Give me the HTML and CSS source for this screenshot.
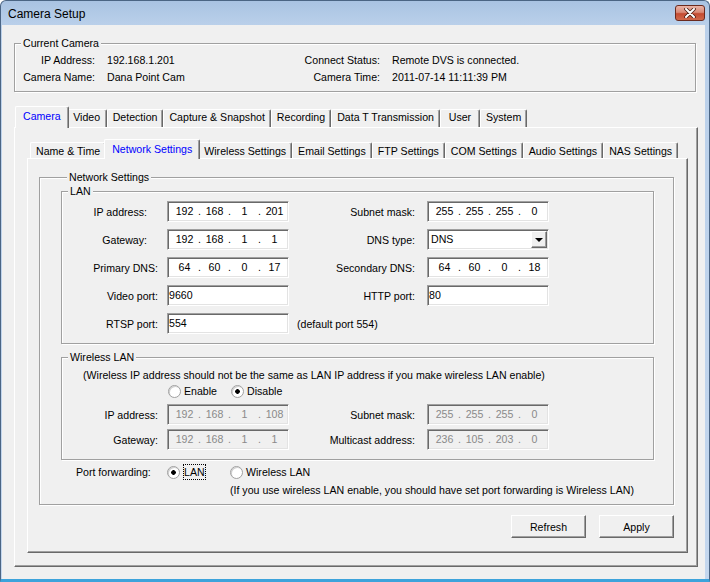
FILE: index.html
```html
<!DOCTYPE html>
<html>
<head>
<title>Camera Setup</title>
<link rel="stylesheet" href="styles.css">
</head>
<body>
<div class="window">
  <div class="titlebar">
    <span class="title">Camera Setup</span>
    <span class="close">
      <svg width="12" height="10" viewBox="0 0 12 10">
        <path d="M2 1 L10 9 M10 1 L2 9" stroke="#4a1c12" stroke-width="3.6" stroke-linecap="round"/>
        <path d="M2 1 L10 9 M10 1 L2 9" stroke="#fff" stroke-width="2" stroke-linecap="round"/>
      </svg>
    </span>
  </div>

  <div class="client">
    <div class="group current">
      <div class="legend">Current Camera</div>
      <div class="info">
        <span class="lbl">IP Address:</span><span>192.168.1.201</span>
        <span class="lbl">Connect Status:</span><span>Remote DVS is connected.</span>
        <span class="lbl">Camera Name:</span><span>Dana Point Cam</span>
        <span class="lbl">Camera Time:</span><span>2011-07-14 11:11:39 PM</span>
      </div>
    </div>

    <div class="tabs outer-tabs">
      <span class="tab active">Camera</span>
      <span class="tab">Video</span>
      <span class="tab">Detection</span>
      <span class="tab">Capture &amp; Snapshot</span>
      <span class="tab">Recording</span>
      <span class="tab">Data T Transmission</span>
      <span class="tab">User</span>
      <span class="tab">System</span>
    </div>
    <div class="panel outer-panel">
      <div class="tabs inner-tabs">
        <span class="tab">Name &amp; Time</span>
        <span class="tab active">Network Settings</span>
        <span class="tab">Wireless Settings</span>
        <span class="tab">Email Settings</span>
        <span class="tab">FTP Settings</span>
        <span class="tab">COM Settings</span>
        <span class="tab">Audio Settings</span>
        <span class="tab">NAS Settings</span>
      </div>
      <div class="panel inner-panel">
        <div class="group ns">
          <div class="legend">Network Settings</div>

          <div class="group lan">
            <div class="legend">LAN</div>
            <div class="form lan-form">
              <span class="l1 off">IP address:</span>
              <div class="field ip"><span>192</span><i>.</i><span>168</span><i>.</i><span>1</span><i>.</i><span>201</span></div>
              <span class="l2">Subnet mask:</span>
              <div class="field ip"><span>255</span><i>.</i><span>255</span><i>.</i><span>255</span><i>.</i><span>0</span></div>

              <span class="l1 off">Gateway:</span>
              <div class="field ip"><span>192</span><i>.</i><span>168</span><i>.</i><span>1</span><i>.</i><span>1</span></div>
              <span class="l2">DNS type:</span>
              <div class="field combo"><span>DNS</span><b class="drop"></b></div>

              <span class="l1">Primary DNS:</span>
              <div class="field ip"><span>64</span><i>.</i><span>60</span><i>.</i><span>0</span><i>.</i><span>17</span></div>
              <span class="l2">Secondary DNS:</span>
              <div class="field ip"><span>64</span><i>.</i><span>60</span><i>.</i><span>0</span><i>.</i><span>18</span></div>

              <span class="l1">Video port:</span>
              <div class="field text">9660</div>
              <span class="l2">HTTP port:</span>
              <div class="field text">80</div>

              <span class="l1">RTSP port:</span>
              <div class="field text">554</div>
              <span class="hint">(default port 554)</span>
              <span></span>
            </div>
          </div>

          <div class="group wlan">
            <div class="legend">Wireless LAN</div>
            <div class="note">(Wireless IP address should not be the same as LAN IP address if you make wireless LAN enable)</div>
            <div class="choices">
              <span class="option"><span class="radio"></span>Enable</span>
              <span class="option"><span class="radio on"></span>Disable</span>
            </div>
            <div class="form wlan-form">
              <span class="l1">IP address:</span>
              <div class="field ip off"><span>192</span><i>.</i><span>168</span><i>.</i><span>1</span><i>.</i><span>108</span></div>
              <span class="l2">Subnet mask:</span>
              <div class="field ip off"><span>255</span><i>.</i><span>255</span><i>.</i><span>255</span><i>.</i><span>0</span></div>

              <span class="l1">Gateway:</span>
              <div class="field ip off"><span>192</span><i>.</i><span>168</span><i>.</i><span>1</span><i>.</i><span>1</span></div>
              <span class="l2">Multicast address:</span>
              <div class="field ip off"><span>236</span><i>.</i><span>105</span><i>.</i><span>203</span><i>.</i><span>0</span></div>
            </div>
          </div>

          <div class="pf">
            <div class="pf-row">
              <span class="pf-label">Port forwarding:</span>
              <span class="option pf-lan"><span class="radio on"></span><span class="focus">LAN</span></span>
              <span class="option"><span class="radio"></span>Wireless LAN</span>
            </div>
            <div class="pf-note">(If you use wireless LAN enable, you should have set port forwarding is Wireless LAN)</div>
          </div>
        </div>

        <div class="actions">
          <button class="btn">Refresh</button>
          <button class="btn">Apply</button>
        </div>
      </div>
    </div>
  </div>
</div>
</body>
</html>
```

FILE: styles.css
```css
body {
  margin: 0;
  font-family: "Liberation Sans", Arial, sans-serif;
  font-size: 10.6px;
  color: #000;
  background: #fff;
}

.window {
  width: 710px;
  height: 582px;
  box-sizing: border-box;
  border: 1px solid #4b6584;
  border-bottom: 3px solid #3da3db;
  border-radius: 6px 6px 0 0;
  padding: 0 4px 0 1px;
  background: linear-gradient(180deg, #a9c3e2 0, #bad0ea 24px, #c4d7ee 100%);
}

/* title bar */
.titlebar {
  height: 24px;
  display: flex;
  align-items: center;
  justify-content: space-between;
  padding-left: 6px;
}

.title {
  font-size: 12px;
  padding-top: 2px;
}

.close {
  width: 30px;
  height: 16px;
  box-sizing: border-box;
  border: 1px solid #6b2a1e;
  border-radius: 3px;
  background: linear-gradient(180deg, #eab3a6 0, #d98a77 45%, #c44b31 55%, #d0694c 100%);
  display: flex;
  align-items: center;
  justify-content: center;
}

/* client area */
.client {
  height: 554px;
  box-sizing: border-box;
  background: #f0f0f0;
  padding: 18px 0 0 12px;
  white-space: nowrap;
}

/* group boxes */
.group {
  border: 1px solid #a0a0a0;
  box-shadow: inset 1px 1px #fff, 1px 1px #fff;
}

.legend {
  display: table;
  margin: -7px 0 0 6px;
  padding: 0 2px;
  line-height: 13px;
  background: #f0f0f0;
}

.current {
  width: 682px;
  box-sizing: border-box;
  padding-bottom: 5px;
}

.info {
  display: grid;
  grid-template-columns: 80px 183px 78px 1fr;
  column-gap: 12px;
  margin-top: 2px;
  line-height: 17px;
}

.lbl {
  text-align: right;
}

/* tabs */
.tabs {
  display: flex;
  align-items: flex-end;
  position: relative;
  z-index: 1;
}

.tab {
  box-sizing: border-box;
  min-width: 40px;
  padding: 0 5px;
  text-align: center;
  border: 1px solid;
  border-color: #fff #696969 transparent #fff;
  border-bottom: 0;
  border-radius: 2px 2px 0 0;
  box-shadow: inset -1px 0 #a0a0a0;
  background: #f0f0f0;
}

.tab.active {
  position: relative;
  z-index: 1;
  margin: 0 -2px -1px;
  padding: 0 7px;
  color: #0000ff;
}

.outer-tabs {
  height: 21px;
  margin-top: 14px;
  padding-left: 3px;
}

.outer-tabs .tab {
  height: 18px;
  line-height: 15px;
}

.outer-tabs .tab.active {
  height: 22px;
  padding-top: 2px;
}

.inner-tabs {
  height: 19px;
  padding-left: 3px;
}

.inner-tabs .tab {
  height: 16px;
  line-height: 17px;
}

.inner-tabs .tab.active {
  height: 20px;
  line-height: 18px;
}

.panel {
  border: 1px solid;
  border-color: #fff #696969 #696969 #fff;
  box-shadow: inset -1px -1px #a0a0a0;
  background: #f0f0f0;
}

.outer-panel {
  width: 684px;
  box-sizing: border-box;
  padding: 11px 9px 13px 12px;
}

.inner-panel {
  padding: 18px 13px 14px 11px;
}

/* network settings */
.ns {
  padding: 0 19px 6px 21px;
}

.lan {
  margin-top: 7px;
  padding-bottom: 9px;
}

.form {
  display: grid;
  grid-template-columns: 105px 122px 138px 122px;
  grid-auto-rows: 21px;
  align-items: center;
}

.lan-form {
  margin-top: 3px;
  row-gap: 7px;
}

.l1 {
  text-align: right;
  padding-right: 9px;
}

.l1.off {
  padding-right: 20px;
}

.l2 {
  text-align: right;
  padding-right: 12px;
}

.hint {
  padding-left: 8px;
}

.field {
  width: 122px;
  height: 21px;
  box-sizing: border-box;
  border: 1px solid;
  border-color: #a0a0a0 #fff #fff #a0a0a0;
  box-shadow: inset 1px 1px #696969, inset -1px -1px #e3e3e3;
  background: #fff;
  line-height: 19px;
}

.field.off {
  background: #f0f0f0;
  color: #8a8a8a;
}

.text {
  padding-left: 1px;
}

.ip {
  display: flex;
  padding-left: 4px;
}

.ip span {
  width: 25px;
  text-align: center;
}

.ip i {
  width: 5px;
  font-style: normal;
  text-align: center;
}

.combo {
  display: flex;
  align-items: center;
  padding-left: 3px;
}

.drop {
  width: 16px;
  height: 17px;
  margin-left: auto;
  margin-right: 1px;
  box-sizing: border-box;
  border: 1px solid;
  border-color: #fff #696969 #696969 #fff;
  box-shadow: inset -1px -1px #a0a0a0;
  background: #f0f0f0;
  display: flex;
  align-items: center;
  justify-content: center;
}

.drop::after {
  content: "";
  border-left: 4px solid transparent;
  border-right: 4px solid transparent;
  border-top: 4px solid #000;
}

/* wireless */
.wlan {
  margin-top: 13px;
  padding: 0 0 9px 0;
}

.note {
  margin: 5px 0 0 21px;
  line-height: 13px;
}

.choices {
  display: flex;
  gap: 14px;
  margin: 3px 0 0 106px;
  line-height: 13px;
}

.option {
  display: inline-flex;
  align-items: center;
  gap: 3px;
}

.radio {
  width: 13px;
  height: 13px;
  box-sizing: border-box;
  border-radius: 50%;
  border: 1px solid #a0a0a0;
  box-shadow: inset 1px 1px #cfcfcf;
  background: #fff;
}

.radio.on {
  background: radial-gradient(circle, #000 0 2px, #fff 2.6px);
}

.wlan-form {
  margin-top: 6px;
  row-gap: 4px;
}

/* port forwarding */
.pf {
  margin-top: 4px;
  line-height: 16px;
}

.pf-row {
  display: flex;
  align-items: center;
  padding-left: 15px;
}

.pf-label {
  width: 91px;
}

.pf-lan {
  width: 63px;
}

.focus {
  line-height: 14px;
  border: 1px dotted #000;
}

.pf-note {
  margin-top: 2px;
  padding-left: 169px;
}

/* buttons */
.actions {
  display: flex;
  justify-content: flex-end;
  gap: 13px;
  margin-top: 10px;
}

.btn {
  width: 75px;
  height: 23px;
  font: inherit;
  color: #000;
  background: #f0f0f0;
  border: 1px solid;
  border-color: #fff #696969 #696969 #fff;
  box-shadow: inset -1px -1px #a0a0a0;
  padding: 0;
}
```
